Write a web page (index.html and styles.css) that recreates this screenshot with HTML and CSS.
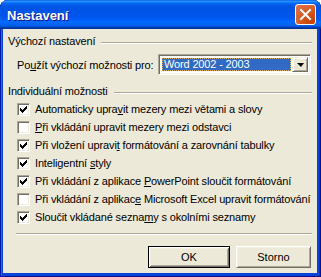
FILE: index.html
```html
<!DOCTYPE html>
<html>
<head>
<meta charset="utf-8">
<link rel="stylesheet" href="styles.css">
</head>
<body>
<div class="window">
  <div class="titlebar">
    <span class="title">Nastavení</span>
    <span class="close"><svg width="13" height="13" viewBox="0 0 13 13"><path d="M2 2 L11 11 M11 2 L2 11" stroke="#fff" stroke-width="2" stroke-linecap="square"/></svg></span>
  </div>
  <div class="client">
    <div class="group-head"><span>Výchozí nastavení</span><span class="rule"></span></div>
    <div class="combo-row">
      <span class="label">Po<u>u</u>žít výchozí možnosti pro:</span>
      <div class="combo">
        <div class="combo-value"><span class="sel">Word 2002 - 2003</span></div>
        <div class="combo-btn"><span class="tri"></span></div>
      </div>
    </div>
    <div class="group-head g2"><span>Individuální možnosti</span><span class="rule"></span></div>
    <div class="checks">
      <div class="check-row"><span class="box on"></span><span>Automaticky upra<u>v</u>it mezery mezi větami a slovy</span></div>
      <div class="check-row"><span class="box"></span><span><u>P</u>ři vkládání upravit mezery mezi odstavci</span></div>
      <div class="check-row"><span class="box on"></span><span>Při vložení upravi<u>t</u> formátování a zarovnání tabulky</span></div>
      <div class="check-row"><span class="box on"></span><span>Inteligentní <u>s</u>tyly</span></div>
      <div class="check-row"><span class="box on"></span><span>Při vkládání z aplikace <u>P</u>owerPoint sloučit formátování</span></div>
      <div class="check-row"><span class="box"></span><span>Při vkládání z aplikac<u>e</u> Microsoft Excel upravit formátování</span></div>
      <div class="check-row"><span class="box on"></span><span>Sloučit vkládané sezna<u>m</u>y s okolními seznamy</span></div>
    </div>
    <div class="separator"></div>
    <div class="buttons">
      <button class="btn default">OK</button>
      <button class="btn">Storno</button>
    </div>
  </div>
</div>
</body>
</html>
```
FILE: styles.css
```css
html, body { margin: 0; padding: 0; background: #fff; }
body { font-family: "Liberation Sans", Arial, sans-serif; font-size: 11px; color: #000; letter-spacing: -0.15px; }
.window {
  width: 321px; height: 277px; box-sizing: border-box;
  background: #0842d6;
  border-radius: 8px 8px 0 0;
  padding: 0 4px 4px 3px;
  box-shadow: inset 1px 0 #0019a6, inset -1px 0 #00138c, inset 0 -1px #00138c, inset 2px 0 #166aee, inset -2px 0 #0831d9;
  display: flex; flex-direction: column;
}
.titlebar {
  height: 29px; margin: 0 -4px 0 -3px;
  border-radius: 8px 8px 0 0;
  background: linear-gradient(to bottom, #0058ee 0%, #3593ff 4%, #288eff 6%, #127dff 8%, #036ffc 10%, #0262ee 14%, #0057e5 20%, #0054e3 24%, #0055eb 56%, #005bf5 66%, #026afe 76%, #0062ef 86%, #0052d6 92%, #0040ab 94%, #003092 100%);
  display: flex; align-items: center; justify-content: space-between;
  padding: 0 5px 0 7px;
}
.title {
  color: #fff; font-weight: bold; font-size: 13px; letter-spacing: 0;
  text-shadow: 1px 1px #0f1089;
  padding-top: 1px;
}
.close {
  width: 21px; height: 21px; box-sizing: border-box;
  border: 1px solid #fff; border-radius: 3px;
  background: radial-gradient(circle at 90% 90%, #c84000 0%, #d85a20 55%, #d8683a 70%, #e56a3c 90%, #f08a68 100%);
  display: flex; align-items: center; justify-content: center;
}
.close svg { display: block; }
.client {
  flex: 1; background: #ece9d8;
  padding: 0 5px 0 0;
  display: flex; flex-direction: column;
  white-space: nowrap;
}
.group-head {
  display: flex; align-items: center; height: 13px; line-height: 13px;
  margin-top: 6px; padding-left: 5px;
}
.group-head.g2 { margin-top: 10px; }
.rule {
  flex: 1; height: 0; margin-left: 6px; margin-top: 3px;
  border-top: 1px solid #aca899; border-bottom: 1px solid #fff;
}
.combo-row {
  display: flex; align-items: center; justify-content: space-between;
  height: 21px; margin-top: 6px; padding-left: 14px;
}
.combo {
  width: 153px; height: 21px; box-sizing: border-box;
  background: #fff;
  border-top: 1px solid #aca899; border-left: 1px solid #aca899;
  border-right: 1px solid #fff; border-bottom: 1px solid #fff;
  box-shadow: inset 1px 1px #716f64, inset -1px -1px #f1efe2;
  display: flex; padding: 2px; margin-right: 1px;
}
.combo-value { flex: 1; padding: 1px; display: flex; }
.sel {
  flex: 1; background: #316ac5; color: #fff;
  outline: 1px dotted #e0b060; outline-offset: -1px;
  line-height: 13px; padding-left: 2px;
}
.combo-btn {
  width: 16px; box-sizing: border-box;
  background: #ece9d8;
  border-top: 1px solid #f1efe2; border-left: 1px solid #f1efe2;
  border-right: 1px solid #716f64; border-bottom: 1px solid #716f64;
  box-shadow: inset 1px 1px #fff, inset -1px -1px #aca899;
  display: flex; align-items: center; justify-content: center;
}
.tri {
  width: 0; height: 0;
  border-left: 4px solid transparent; border-right: 3px solid transparent;
  border-top: 4px solid #000;
}
.checks { margin-top: 2px; display: flex; flex-direction: column; }
.check-row {
  height: 18px; display: flex; align-items: center; padding-left: 14px; gap: 5px;
}
.box {
  width: 13px; height: 13px; box-sizing: border-box; flex: none;
  background: #fff;
  border-top: 1px solid #aca899; border-left: 1px solid #aca899;
  border-right: 1px solid #fff; border-bottom: 1px solid #fff;
  box-shadow: inset 1px 1px #716f64, inset -1px -1px #f1efe2;
  position: relative;
}
.box.on::after {
  content: ""; position: absolute; left: 2px; top: 2px; width: 7px; height: 7px;
  background:
    linear-gradient(#000,#000) 0 2px / 1px 3px no-repeat,
    linear-gradient(#000,#000) 1px 3px / 1px 3px no-repeat,
    linear-gradient(#000,#000) 2px 4px / 1px 3px no-repeat,
    linear-gradient(#000,#000) 3px 3px / 1px 3px no-repeat,
    linear-gradient(#000,#000) 4px 2px / 1px 3px no-repeat,
    linear-gradient(#000,#000) 5px 1px / 1px 3px no-repeat,
    linear-gradient(#000,#000) 6px 0 / 1px 3px no-repeat;
}
.separator {
  margin: 7px 0 0 13px; height: 0;
  border-top: 1px solid #aca899; border-bottom: 1px solid #fff;
}
.buttons {
  display: flex; justify-content: flex-end; gap: 6px;
  margin-top: 11px; padding-right: 1px;
}
.btn {
  font-family: "Liberation Sans", Arial, sans-serif; font-size: 11px; color: #000; letter-spacing: 0;
  width: 75px; height: 22px; box-sizing: border-box; padding: 0;
  background: #ece9d8;
  border-top: 1px solid #fff; border-left: 1px solid #fff;
  border-right: 1px solid #716f64; border-bottom: 1px solid #716f64;
  box-shadow: inset 1px 1px #f1efe2, inset -1px -1px #aca899;
}
.btn.default {
  width: 82px;
  border: 1px solid #000;
  box-shadow: inset 1px 1px #fff, inset -1px -1px #716f64, inset 2px 2px #f1efe2, inset -2px -2px #aca899;
}
```
